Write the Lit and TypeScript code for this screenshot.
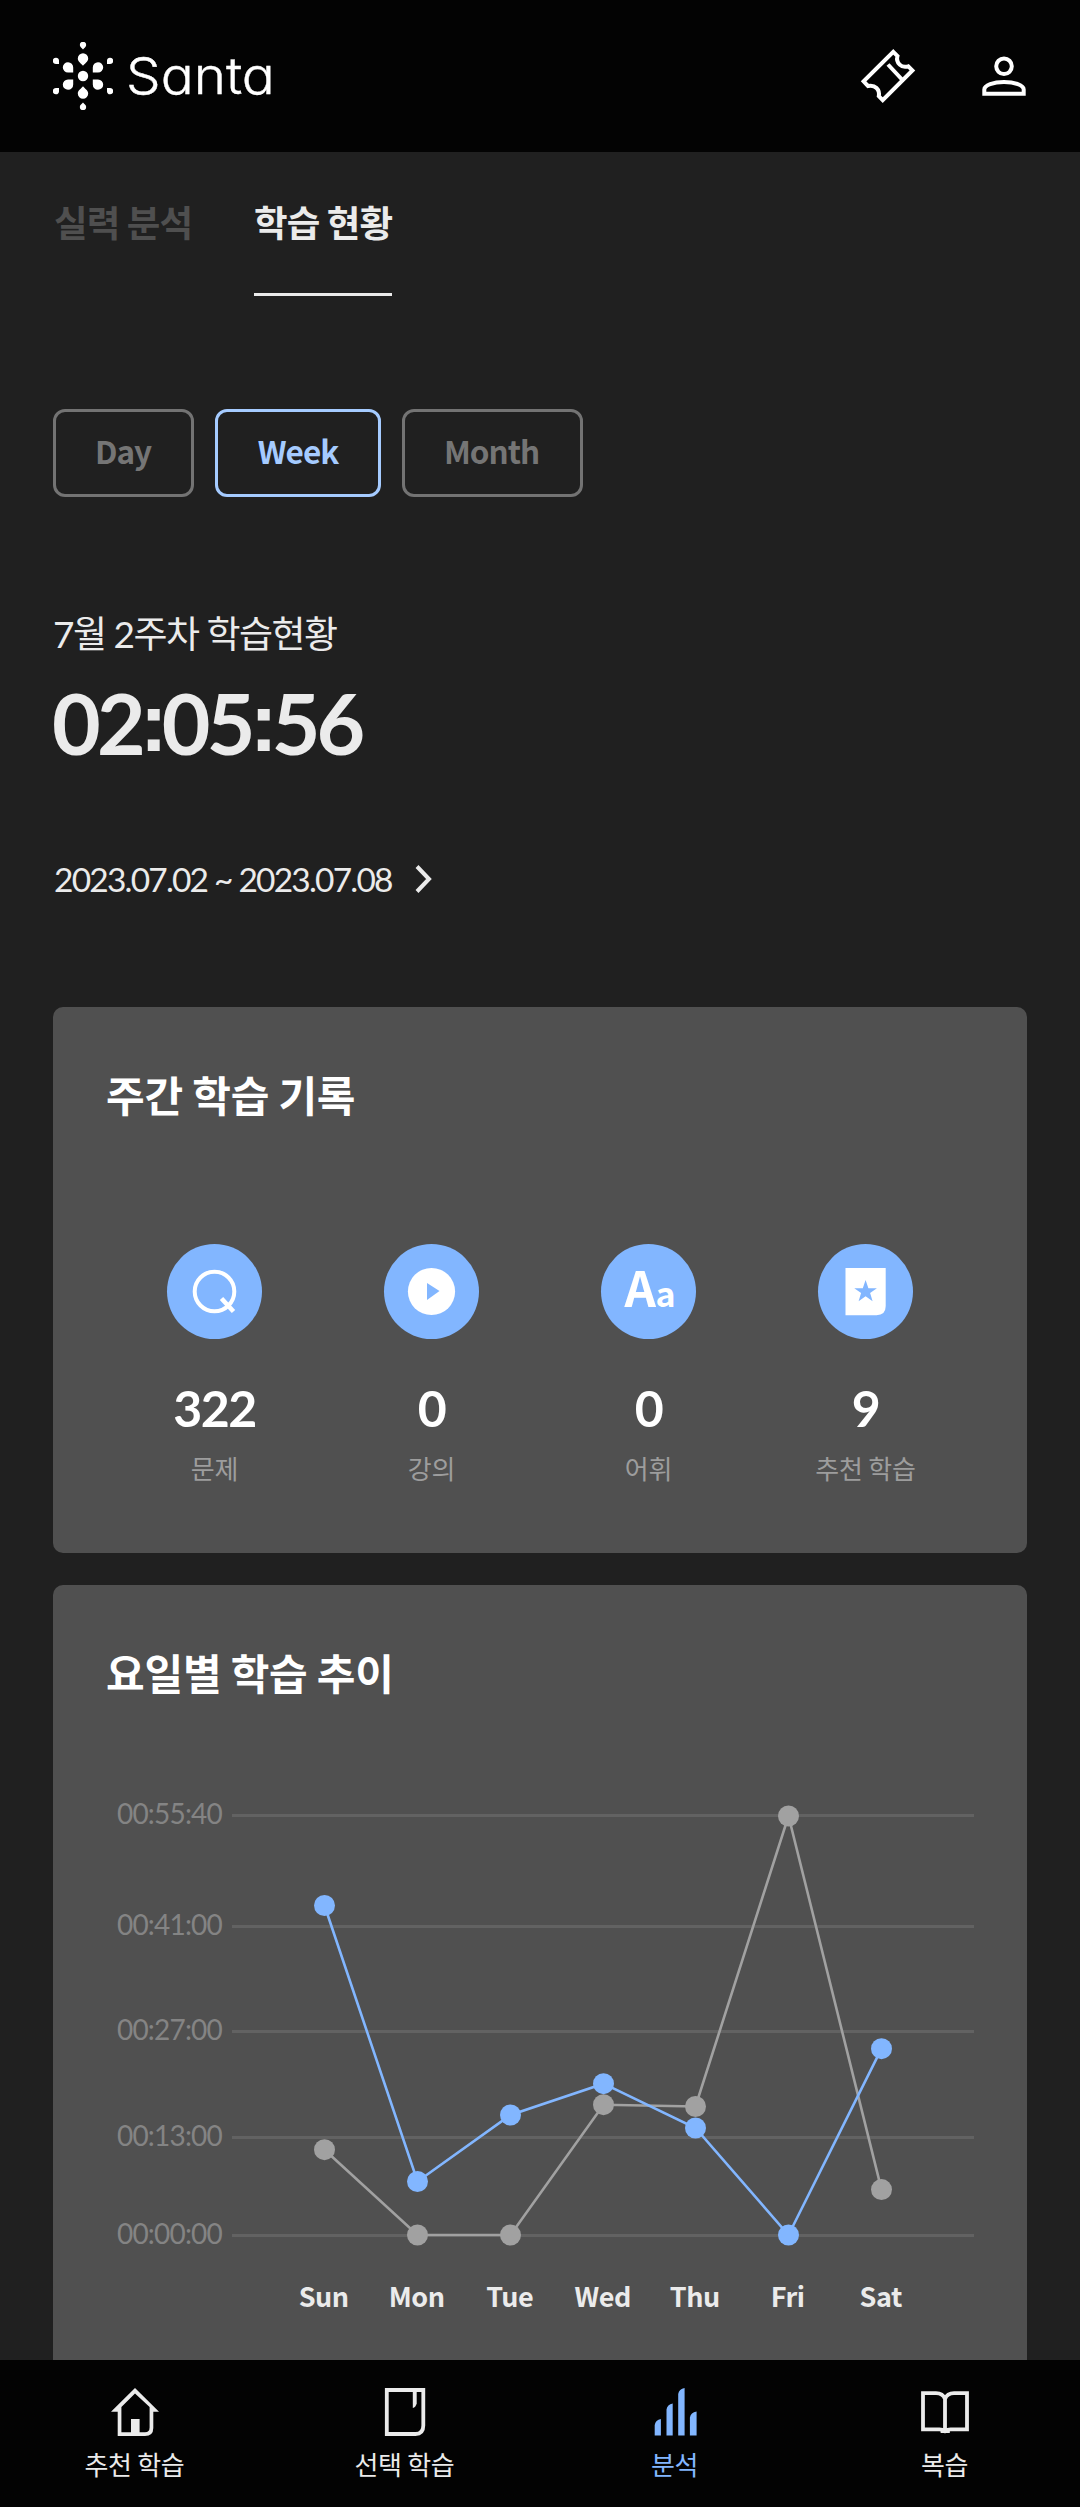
import { LitElement, html, css, svg } from "lit";
import { customElement, property } from "lit/decorators.js";

const GRID = [
  { label: "00:55:40", y: 1815.5 },
  { label: "00:41:00", y: 1926.5 },
  { label: "00:27:00", y: 2031.5 },
  { label: "00:13:00", y: 2137.5 },
  { label: "00:00:00", y: 2235.5 },
];
const DAYS = ["Sun", "Mon", "Tue", "Wed", "Thu", "Fri", "Sat"];
const XS = [324.5, 417.5, 510.5, 603.5, 695.5, 788.5, 881.5];
const LAST_WEEK = [2149.7, 2235, 2235, 2104.7, 2106.5, 1816, 2189.6];
const THIS_WEEK = [1905.5, 2181.5, 2115, 2083.7, 2128, 2235, 2048.7];

const icons = {
  question: svg`<circle cx="47.5" cy="47.5" r="19.8" fill="none" stroke="#fff" stroke-width="4"/><path d="M54.5 54.5 66.5 67.5" stroke="#fff" stroke-width="4.6"/>`,
  play: svg`<circle cx="47.5" cy="47.5" r="23.6" fill="#fff"/><path d="M43 39 55.5 47 43 56Z" fill="#82b6ff"/>`,
  words: svg``,
  star: svg`<path d="M27.5 24H67.7V62Q67.7 71.2 58.5 71.2H27.5Z" fill="#fff"/><path d="M47.6 36 50.4 44.2H58.9L52.1 49.1 54.6 57.2 47.6 52.2 40.6 57.2 43.1 49.1 36.3 44.2H44.8Z" fill="#82b6ff"/>`,
};

const navIcons = {
  home: svg`<path fill-rule="evenodd" d="M24 0 48 23.7H42.3V40Q42.3 48 34 48H6.7V23.7H0ZM24 5.4 10.4 19V44.2H20V31H28.6V44.2H34Q38.6 44.2 38.6 39.5V19Z" fill="currentColor"/>`,
  note: svg`<path d="M5.8 2H42.3V37.5Q42.3 46 34.5 46H5.8Z" fill="none" stroke="currentColor" stroke-width="3.8"/><path d="M31.8 3H35.7V15.5Q34.5 19.5 31.8 20Z" fill="currentColor"/>`,
  bars: svg`<path d="M3.7 47.6V37Q4.5 31.8 9.9 31V47.6ZM15.5 47.6V21.5Q16.3 16.2 21.7 15.4V47.6ZM27.2 47.6V6Q28 .8 33.6 0V47.6ZM38.9 47.6V29.5Q39.7 24.2 45.6 23.4V47.6Z" fill="currentColor"/>`,
  book: svg`<path d="M24 42.5V11C22.5 7 19 5.2 15 5.2H2V41.3H18.5Q21.5 41.3 24 43.2 26.5 41.3 29.5 41.3H46V5.2H33C29 5.2 25.5 7 24 11" fill="none" stroke="currentColor" stroke-width="3.8"/><path d="M19.6 42H28.8V45H19.6Z" fill="currentColor"/>`,
};

@customElement("stat-item")
class StatItem extends LitElement {
  @property() icon: keyof typeof icons = "question";
  @property() value = "";
  @property() label = "";
  static styles = css`
    :host { display: flex; flex-direction: column; align-items: center; }
    .disc { width: 95px; height: 95px; border-radius: 50%; background: #82b6ff; display: flex; align-items: center; justify-content: center; }
    .disc svg { width: 95px; height: 95px; display: block; }
    .aa { font-family: "Noto Sans CJK KR", sans-serif; font-weight: 700; color: #fff; font-size: 49px; line-height: 60px; height: 72px; letter-spacing: -0.5px; padding-left: 3px; }
    .aa small { font-size: 34px; letter-spacing: 0; }
    .value { margin-top: 39px; height: 60px; font: 700 50px/60px Lato, sans-serif; letter-spacing: -1.5px; color: #fff; }
    .label { margin-top: 10px; font: 400 26px/40px "Noto Sans CJK KR", sans-serif; letter-spacing: -0.2px; color: #9d9d9d; }
  `;
  render() {
    return html`
      <div class="disc">
        ${this.icon === "words"
          ? html`<span class="aa">A<small>a</small></span>`
          : html`<svg viewBox="0 0 95 95">${icons[this.icon]}</svg>`}
      </div>
      <div class="value">${this.value}</div>
      <div class="label">${this.label}</div>
    `;
  }
}

@customElement("nav-item")
class NavItem extends LitElement {
  @property() icon: keyof typeof navIcons = "home";
  @property() label = "";
  static styles = css`
    :host { display: flex; flex-direction: column; align-items: center; padding: 28px 0 0 0; color: #ebebeb; }
    :host([active]) { color: #82b6ff; }
    svg { width: 48px; height: 48px; display: block; }
    .label { margin-top: 8px; font: 400 26px/40px "Noto Sans CJK KR", sans-serif; letter-spacing: -0.3px; padding-right: 1px; }
  `;
  render() {
    return html`<svg viewBox="0 0 48 48">${navIcons[this.icon]}</svg><div class="label">${this.label}</div>`;
  }
}

@customElement("app-root")
class AppRoot extends LitElement {
  static styles = css`
    :host { display: flex; flex-direction: column; width: 1080px; height: 2507px; overflow: hidden; background: #202020; color: #ebebeb; font-family: "Noto Sans CJK KR", sans-serif; }
    header { flex: none; height: 152px; box-sizing: border-box; padding: 0 54px 0 53px; background: #030303; display: flex; align-items: center; justify-content: space-between; }
    header svg { display: block; }
    .brand { display: flex; align-items: center; gap: 13px; }
    .word { font: 350 51px/60px Inter, sans-serif; font-feature-settings: "cv11"; color: #fff; -webkit-text-stroke: 0.4px #fff; transform: scaleX(1.075); transform-origin: left; }
    .actions { display: flex; align-items: center; gap: 66px; }
    .tabs { flex: none; display: flex; gap: 62px; padding-left: 54px; height: 144px; }
    .tab { box-sizing: border-box; height: 144px; padding-top: 43px; font-weight: 700; font-size: 36.5px; line-height: 54px; letter-spacing: -0.9px; color: #4f4f4f; border-bottom: 3px solid transparent; }
    .tab.on { color: #ebebeb; border-color: #ebebeb; }
    main { flex: 1; min-height: 0; overflow: hidden; padding: 113px 53px 0; }
    .chips { display: flex; gap: 21px; }
    .chip { box-sizing: border-box; height: 88px; border: 3px solid #737373; border-radius: 12px; font-weight: 700; font-size: 31.5px; line-height: 77px; letter-spacing: -1px; text-align: center; color: #757575; width: 141px; padding-right: 1px; }
    .chip.on { color: #a5cbff; border-color: #a5cbff; width: 166px; padding-right: 0; }
    .chip.month { width: 181px; padding-right: 2px; }
    .title { margin-top: 110px; font: 400 37px/54px Lato, "Noto Sans CJK KR", sans-serif; letter-spacing: -1.5px; }
    .time { margin-top: 12px; height: 100px; font: 700 84px/100px Lato, sans-serif; letter-spacing: -3.8px; margin-left: -1px; }
    .colon { font-family: "Liberation Sans", sans-serif; line-height: 0; vertical-align: 4px; letter-spacing: -6px; margin-left: -2px; }
    .range { margin-top: 84px; padding-left: 1px; display: flex; align-items: center; font: 400 33.5px/44px Lato, sans-serif; letter-spacing: -1.8px; }
    .range svg { margin-left: 23px; display: block; }
    .card { background: #505050; border-radius: 10px; padding: 0 53px; }
    .card h2 { margin: 0; font-weight: 700; font-size: 42px; line-height: 60px; letter-spacing: -0.2px; color: #fff; }
    .record { margin-top: 106px; height: 546px; box-sizing: border-box; padding-top: 57px; }
    .stats { display: grid; grid-template-columns: repeat(4, 217px); margin-top: 120px; }
    .trend { margin-top: 32px; height: 900px; box-sizing: border-box; padding-top: 57px; }
    .chart { display: block; margin: 68px 0 0 0; }
    .axis { font: 400 28px Lato, sans-serif; fill: #848484; letter-spacing: -0.8px; }
    .day { font: 700 27px "Noto Sans CJK KR", sans-serif; fill: #ebebeb; letter-spacing: -0.5px; }
    nav { flex: none; height: 147px; background: #030303; display: grid; grid-template-columns: repeat(4, 1fr); }
  `;

  private series(ys: number[], color: string) {
    return svg`
      <polyline points=${ys.map((y, i) => `${XS[i]},${y}`).join(" ")} fill="none" stroke=${color} stroke-width="2.6"/>
      ${ys.map((y, i) => svg`<circle cx=${XS[i]} cy=${y} r="10.5" fill=${color}/>`)}
    `;
  }

  render() {
    return html`
      <header>
        <div class="brand">
          <svg width="60" height="68" viewBox="-30 -34 60 68" fill="#fff">
            <circle r="5.2"/>
            ${[1, -1].map((s) => svg`<g transform="scale(1 ${s})">
              <path d="M0-10.2C-1.5-12.5-5.2-14-5.2-17.5a5.2 5.2 0 0 1 10.4 0C5.2-14 1.5-12.5 0-10.2Z"/>
              <path d="M0-26.6C-1-28-3.2-29-3.2-31a3.2 3.2 0 0 1 6.4 0C3.2-29 1-28 0-26.6Z"/>
              ${[1, -1].map((t) => svg`<g transform="scale(${t} 1)">
                <path d="M9.8-3.4V-8.5a5.2 5.2 0 1 1 5.2 5.1Z"/>
                <path d="M24-12V-15.4a3.1 3.1 0 1 1 3.1 3.4Z"/>
              </g>`)}
            </g>`)}
          </svg>
          <span class="word">Santa</span>
        </div>
        <div class="actions">
          <svg width="56" height="56" viewBox="860 48 56 56" fill="none" stroke="#fff" stroke-width="4">
            <path d="M893.3 51.8 897.5 56C896.3 60 897.7 62.7 899.7 64.6 901.7 66.6 904.5 67.4 908.2 66.3L912.4 70.4 882.7 100.1 878.8 96.2C879.5 92.5 878.5 90 876.5 88 874.5 86 872 85.2 868 86L863.6 81.4Z"/>
            <path d="M888 64.5 902 79.5"/>
          </svg>
          <svg width="44" height="56" viewBox="982 48 44 56" fill="none" stroke="#fff" stroke-width="4">
            <circle cx="1004" cy="66.3" r="7.8"/>
            <path d="M984.3 93.8H1023.7V89.5C1023.7 85 1014.5 82 1004 82S984.3 85 984.3 89.5Z"/>
          </svg>
        </div>
      </header>
      <div class="tabs">
        <div class="tab">실력 분석</div>
        <div class="tab on">학습 현황</div>
      </div>
      <main>
        <div class="chips">
          <div class="chip">Day</div>
          <div class="chip on">Week</div>
          <div class="chip month">Month</div>
        </div>
        <div class="title">7월 2주차 학습현황</div>
        <div class="time">02<span class="colon">:</span>05<span class="colon">:</span>56</div>
        <div class="range">
          2023.07.02 ~ 2023.07.08
          <svg width="18" height="28" viewBox="0 0 18 28"><path d="M2 1.5 14 14 2 26.5" fill="none" stroke="#ebebeb" stroke-width="4"/></svg>
        </div>
        <section class="card record">
          <h2>주간 학습 기록</h2>
          <div class="stats">
            <stat-item icon="question" value="322" label="문제"></stat-item>
            <stat-item icon="play" value="0" label="강의"></stat-item>
            <stat-item icon="words" value="0" label="어휘"></stat-item>
            <stat-item icon="star" value="9" label="추천 학습"></stat-item>
          </div>
        </section>
        <section class="card trend">
          <h2>요일별 학습 추이</h2>
          <svg class="chart" width="868" height="560" viewBox="106 1770 868 560">
            ${GRID.map((g) => svg`
              <rect x="232" y=${g.y - 1.5} width="742" height="3" fill="#626262"/>
              <text class="axis" x="222" y=${g.y + 8.5} text-anchor="end">${g.label}</text>
            `)}
            ${this.series(LAST_WEEK, "#a1a1a1")}
            ${this.series(THIS_WEEK, "#82b6ff")}
            ${DAYS.map((d, i) => svg`<text class="day" x=${XS[i] - 0.8} y="2307" text-anchor="middle">${d}</text>`)}
          </svg>
        </section>
      </main>
      <nav>
        <nav-item icon="home" label="추천 학습"></nav-item>
        <nav-item icon="note" label="선택 학습"></nav-item>
        <nav-item icon="bars" label="분석" active></nav-item>
        <nav-item icon="book" label="복습"></nav-item>
      </nav>
    `;
  }
}
